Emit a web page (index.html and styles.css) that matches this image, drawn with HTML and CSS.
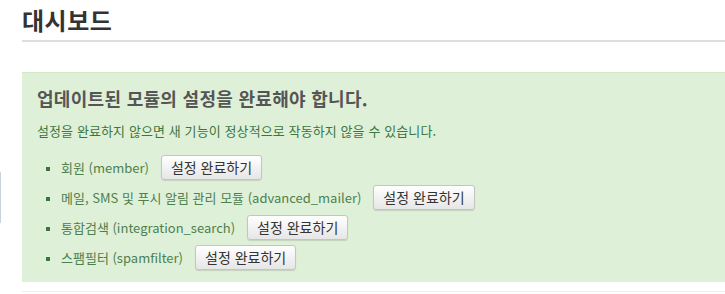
FILE: index.html
```html
<!DOCTYPE html>
<html lang="ko">
<head>
<meta charset="utf-8">
<link rel="stylesheet" href="styles.css">
</head>
<body>
<div class="edge-tab"></div>
<div class="page">
  <h1 class="page-title">대시보드</h1>
  <div class="alert">
    <h2 class="alert-title">업데이트된 모듈의 설정을 완료해야 합니다.</h2>
    <p class="alert-desc">설정을 완료하지 않으면 새 기능이 정상적으로 작동하지 않을 수 있습니다.</p>
    <ul class="module-list">
      <li><span class="module-name">회원 (member)</span><button class="btn">설정 완료하기</button></li>
      <li><span class="module-name">메일, SMS 및 푸시 알림 관리 모듈 (advanced_mailer)</span><button class="btn">설정 완료하기</button></li>
      <li><span class="module-name">통합검색 (integration_search)</span><button class="btn">설정 완료하기</button></li>
      <li><span class="module-name">스팸필터 (spamfilter)</span><button class="btn">설정 완료하기</button></li>
    </ul>
  </div>
  <div class="next-section"></div>
</div>
</body>
</html>
```
FILE: styles.css
```css
html, body {
  margin: 0;
  padding: 0;
  background: #fff;
  overflow: hidden;
}
body {
  font-family: "Noto Sans CJK KR", "Noto Sans", sans-serif;
  color: #333;
}
.edge-tab {
  position: absolute;
  left: 0;
  top: 172px;
  width: 1px;
  height: 51px;
  background: #c9d3dc;
}
.page {
  padding-left: 22px;
}
.page-title {
  margin: 4px 0 0;
  padding-bottom: 4px;
  font-size: 24px;
  line-height: 32px;
  font-weight: bold;
  color: #333;
  border-bottom: 2px solid #ddd;
  letter-spacing: 0.5px;
}
.alert {
  margin-top: 30px;
  background: #dff0d8;
  border-top: 1px solid #d2e8c6;
  padding: 12px 15px 12px;
}
.alert-title {
  margin: 0;
  font-size: 18px;
  line-height: 26px;
  font-weight: bold;
  color: #555;
  letter-spacing: 0.3px;
}
.alert-desc {
  margin: 11px 0 0;
  font-size: 13px;
  line-height: 18px;
  color: #3c763d;
  letter-spacing: 0.1px;
}
.module-list {
  margin: 15px 0 0;
  padding: 0 0 0 24px;
  list-style: square;
  color: #3c763d;
}
.module-list li {
  height: 25px;
  line-height: 25px;
  margin-bottom: 5px;
  font-size: 13px;
}
.module-list li:last-child {
  margin-bottom: 0;
}
.module-list li::marker {
  font-size: 11px;
}
.module-name {
  color: #4d804d;
  margin-right: 12px;
}
.btn {
  font-family: "Noto Sans CJK KR", "Noto Sans", sans-serif;
  font-size: 14px;
  height: 25px;
  line-height: 21px;
  padding: 0 9px;
  color: #333;
  background: linear-gradient(#ffffff, #e6e6e6);
  border: 1px solid #c4c4c4;
  border-radius: 3px;
  box-shadow: 0 1px 1px rgba(0,0,0,0.12);
  vertical-align: top;
  cursor: pointer;
}
.next-section {
  margin-top: 9px;
  border-top: 1px solid #eee;
  height: 10px;
}
```
